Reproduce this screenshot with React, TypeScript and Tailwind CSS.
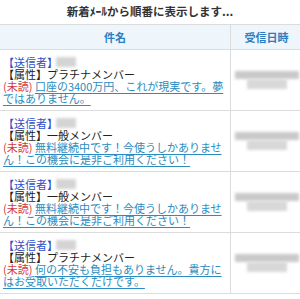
const rows = [
  {
    attr: "プラチナメンバー",
    subject: "口座の3400万円、これが現実です。夢ではありません。",
  },
  {
    attr: "一般メンバー",
    subject: "無料継続中です！今使うしかありません！この機会に是非ご利用ください！",
  },
  {
    attr: "一般メンバー",
    subject: "無料継続中です！今使うしかありません！この機会に是非ご利用ください！",
  },
  {
    attr: "プラチナメンバー",
    subject: "何の不安も負担もありません。貴方にはお受取いただくだけです。",
  },
];

function Blur({ className }: { className: string }) {
  return <span className={`inline-block bg-[#c9c9c9] blur-[1.5px] ${className}`} />;
}

export default function App() {
  return (
    <div
      className="w-[300px] h-[299px] overflow-hidden bg-white text-[11px]"
      style={{ fontFamily: '"Noto Sans CJK JP", "Noto Sans", sans-serif' }}
    >
      <div className="h-[24px] flex items-center justify-center font-bold text-[11.5px] text-[#333]">
        新着ﾒｰﾙから順番に表示します...
      </div>
      <div className="w-[302px] border-t border-[#dcdcdc]">
        <div className="flex h-[25px] bg-[#eef5fb] border-b border-[#dcdcdc] font-bold text-[#2b7ec1]">
          <div className="w-[231px] flex items-center justify-center border-r border-[#dcdcdc]">件名</div>
          <div className="flex-1 flex items-center justify-center">受信日時</div>
        </div>
        {rows.map((r, i) => (
          <div key={i} className="flex h-[61px] border-b border-[#dcdcdc]">
            <div className="w-[231px] border-r border-[#dcdcdc] pl-[3px] pr-[4px] pt-[6px] leading-[12px]">
              <div className="flex items-center text-[#3050c8]">
                【送信者】
                <Blur className="w-[20px] h-[10px] ml-[-2px] bg-[#d4d4d4]" />
              </div>
              <div className="text-[#222]">【属性】{r.attr}</div>
              <div>
                <span className="text-[#d23a3a]">(未読) </span>
                <a className="text-[#2a8cc0] underline underline-offset-[2px]">{r.subject}</a>
              </div>
            </div>
            <div className="flex-1 flex flex-col items-center pt-[21px]">
              <Blur className="w-[64px] h-[8px]" />
              <Blur className="w-[40px] h-[10px] bg-[#d8d8d8]" />
            </div>
          </div>
        ))}
      </div>
    </div>
  );
}
